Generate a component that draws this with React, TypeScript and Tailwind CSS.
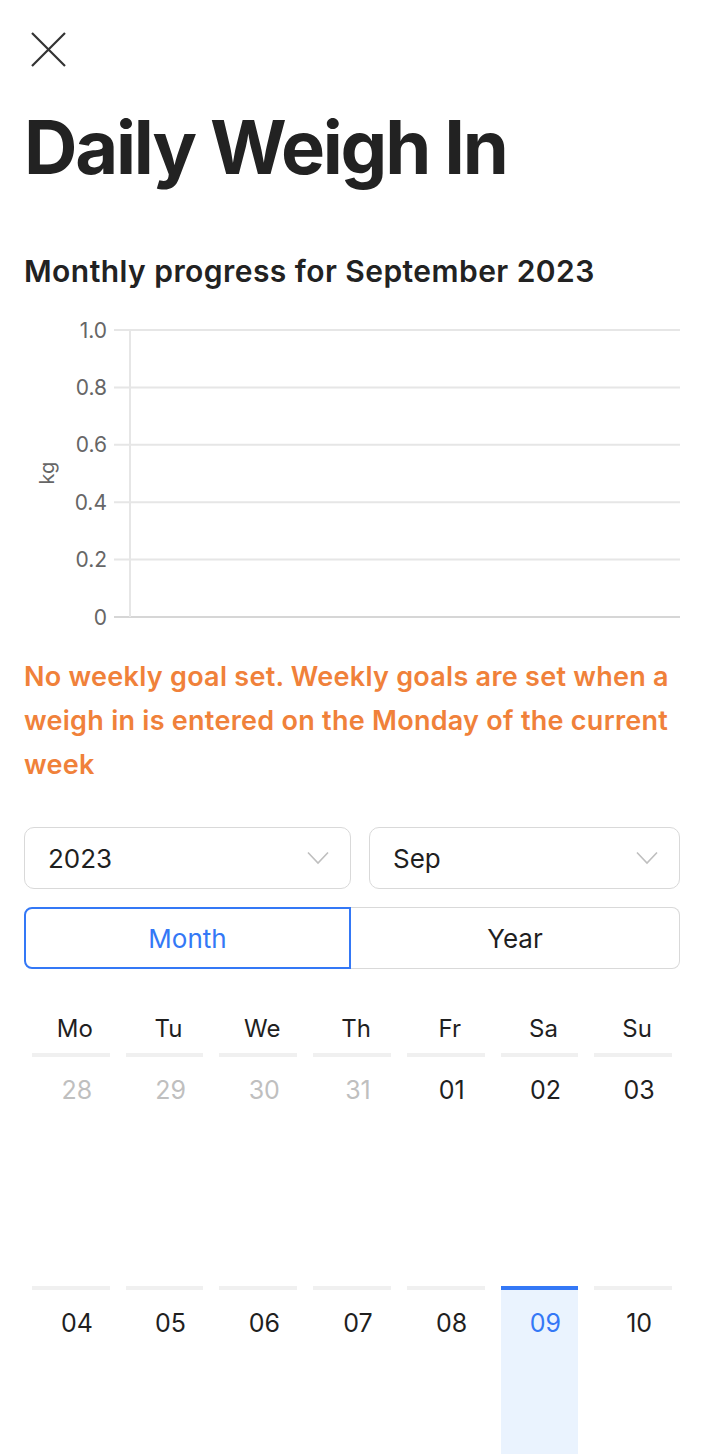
const days = ["Mo", "Tu", "We", "Th", "Fr", "Sa", "Su"];

const weeks = [
  [
    { d: "28", muted: true },
    { d: "29", muted: true },
    { d: "30", muted: true },
    { d: "31", muted: true },
    { d: "01" },
    { d: "02" },
    { d: "03" },
  ],
  [
    { d: "04" },
    { d: "05" },
    { d: "06" },
    { d: "07" },
    { d: "08" },
    { d: "09", selected: true },
    { d: "10" },
  ],
];

const ticks = ["1.0", "0.8", "0.6", "0.4", "0.2", "0"];

const Chevron = () => (
  <svg width="22" height="14" viewBox="0 0 22 14" fill="none">
    <path d="M1 1.5 L11 12 L21 1.5" stroke="#bfbfbf" strokeWidth="1.6" />
  </svg>
);

const Chart = () => {
  const top = 12;
  const step = 57.4;
  return (
    <svg width="656" height="312" viewBox="0 0 656 312" className="block">
      {ticks.map((t, i) => {
        const y = top + i * step;
        return (
          <g key={t}>
            <line
              x1="90"
              x2="656"
              y1={y}
              y2={y}
              stroke={i === ticks.length - 1 ? "#d6d6d6" : "#e6e6e6"}
              strokeWidth="2"
            />
            <text
              x="83"
              y={y + 7.5}
              textAnchor="end"
              fontSize="21"
              fill="#666666"
              fontFamily="Inter, sans-serif"
            >
              {t}
            </text>
          </g>
        );
      })}
      <line x1="106" x2="106" y1={top} y2={top + 5 * step} stroke="#e6e6e6" strokeWidth="2" />
      <text
        x="30"
        y="155"
        textAnchor="middle"
        fontSize="20"
        fill="#666666"
        fontFamily="Inter, sans-serif"
        transform="rotate(-90 30 155)"
      >
        kg
      </text>
    </svg>
  );
};

export default function App() {
  return (
    <div className="min-h-screen bg-white pl-6 pr-[22px] pt-8 font-['Inter',sans-serif] text-[#1f1f1f]">
      <button className="ml-[7px] block">
        <svg width="35" height="35" viewBox="0 0 35 35" fill="none">
          <path d="M1 1 L34 34 M34 1 L1 34" stroke="#333333" strokeWidth="2.2" />
        </svg>
      </button>

      <h1 className="mt-[43px] text-[74px] font-bold leading-none tracking-[-0.03em] text-[#222222]">
        Daily Weigh In
      </h1>

      <h2 className="mt-[72px] text-[30px] font-semibold leading-none tracking-[0.015em] text-[#222222]">
        Monthly progress for September 2023
      </h2>

      <div className="mt-[32px]">
        <Chart />
      </div>

      <p className="mt-[25px] text-[27px] font-semibold leading-[44px] tracking-[0.01em] text-[#f0813a]">
        No weekly goal set. Weekly goals are set when a weigh in is entered on the
        Monday of the current week
      </p>

      <div className="mt-[40px] flex gap-[18px]">
        <div className="flex h-[62px] w-[327px] items-center justify-between rounded-[10px] border-[1.5px] border-[#d9d9d9] pl-[23px] pr-[21px] text-[26px]">
          <span>2023</span>
          <Chevron />
        </div>
        <div className="flex h-[62px] flex-1 items-center justify-between rounded-[10px] border-[1.5px] border-[#d9d9d9] pl-[23px] pr-[21px] text-[26px]">
          <span>Sep</span>
          <Chevron />
        </div>
      </div>

      <div className="mt-[18px] flex h-[62px] text-[26px]">
        <div className="flex w-[327px] items-center justify-center rounded-l-[8px] border-2 border-[#3478f6] text-[#3478f6]">
          Month
        </div>
        <div className="flex flex-1 items-center justify-center rounded-r-[8px] border-[1.5px] border-l-0 border-[#d9d9d9]">
          Year
        </div>
      </div>

      <div className="mt-[44px] px-2">
        <div className="grid grid-cols-7 gap-x-4">
          {days.map((d) => (
            <div key={d} className="h-10 pl-2 text-center text-[24px] leading-8">
              {d}
            </div>
          ))}
        </div>
        {weeks.map((w, wi) => (
          <div key={wi} className="grid grid-cols-7 gap-x-4">
            {w.map((c) => (
              <div
                key={c.d}
                className={
                  c.selected
                    ? "h-[233px] border-t-4 border-[#3478f6] bg-[#eaf3fe] pt-[17px] pl-3 text-center text-[25px] leading-8 text-[#3478f6]"
                    : c.muted
                    ? "h-[233px] border-t-4 border-[#f0f0f0] pt-[17px] pl-3 text-center text-[25px] leading-8 text-[#bfbfbf]"
                    : "h-[233px] border-t-4 border-[#f0f0f0] pt-[17px] pl-3 text-center text-[25px] leading-8"
                }
              >
                {c.d}
              </div>
            ))}
          </div>
        ))}
      </div>
    </div>
  );
}
